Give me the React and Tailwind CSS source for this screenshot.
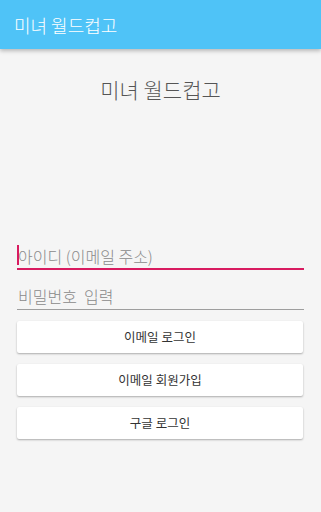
export default function App() {
  const font = { fontFamily: '"Noto Sans CJK KR", Roboto, sans-serif' };
  return (
    <div className="w-[321px] h-[512px] bg-[#f5f5f5] flex flex-col overflow-hidden" style={font}>
      {/* App bar */}
      <div className="h-[49px] bg-[#4fc3f7] flex items-center px-[14px] shadow-[0_2px_4px_rgba(0,0,0,0.25)] relative z-10">
        <span className="text-white text-[18px] leading-none font-light">미녀 월드컵고</span>
      </div>

      <div className="flex flex-col px-[17px] pt-[30px]">
        <h1 className="text-center text-[21px] leading-none text-[#555] h-[28px] font-light">미녀 월드컵고</h1>

        {/* Inputs */}
        <div className="mt-[137px] flex flex-col">
          <div className="h-[26px] border-b-2 border-[#d81b60] flex items-center relative">
            <span className="absolute left-0 top-[1px] w-[2px] h-[20px] bg-[#d81b60]" />
            <span className="text-[16px] leading-none text-[#8a8a8a] pl-[1px] font-light">아이디 (이메일 주소)</span>
          </div>
          <div className="mt-[13px] h-[27px] border-b border-[#9e9e9e] flex items-center">
            <span className="text-[16px] leading-none text-[#8a8a8a] pl-[1px] whitespace-pre font-light">비밀번호  입력</span>
          </div>
        </div>

        {/* Buttons */}
        <div className="mt-[11px] flex flex-col gap-[11px]">
          {['이메일 로그인', '이메일 회원가입', '구글 로그인'].map((t) => (
            <button
              key={t}
              className="h-[32px] w-[286px] bg-white rounded-[2px] shadow-[0_1px_2px_rgba(0,0,0,0.3)] text-[12.5px] text-[#333] flex items-center justify-center"
            >
              {t}
            </button>
          ))}
        </div>
      </div>
    </div>
  );
}
